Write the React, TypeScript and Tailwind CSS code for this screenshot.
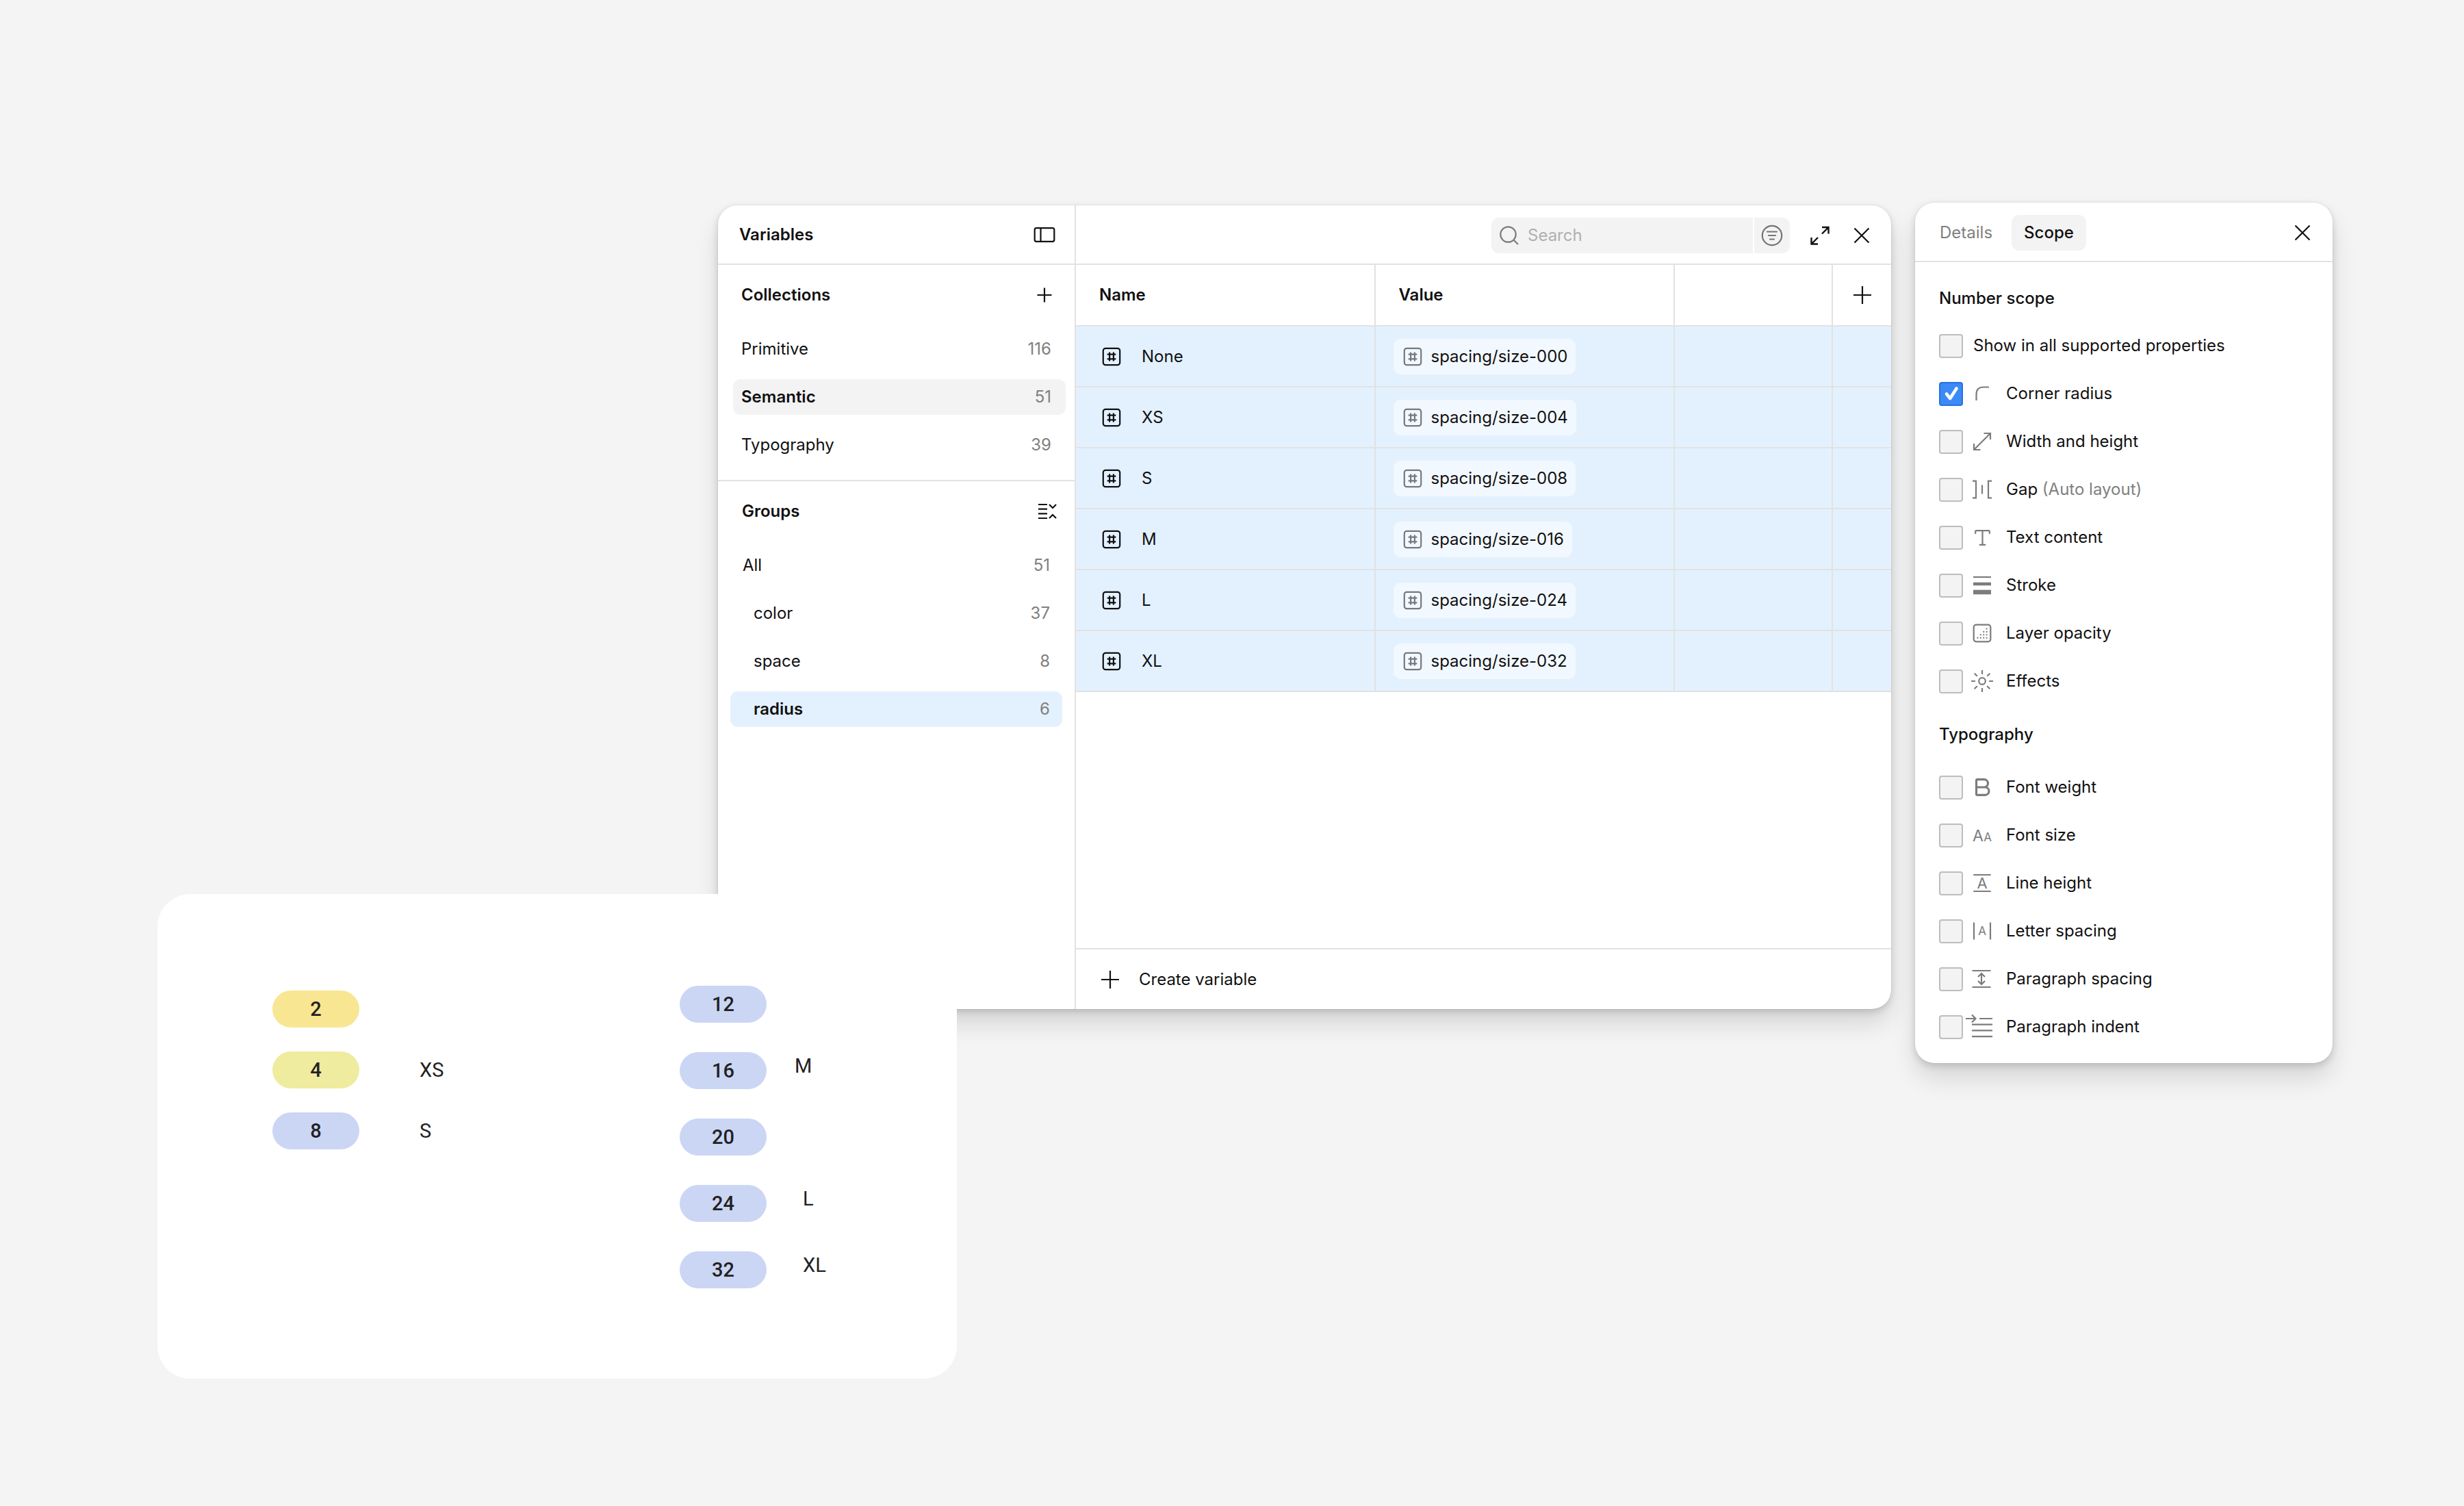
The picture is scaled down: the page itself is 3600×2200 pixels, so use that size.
import { useState } from 'react'
import type { ReactNode } from 'react'
import { Bold, Type } from 'lucide-react'

const collections = [
  { name: 'Primitive', count: 116 },
  { name: 'Semantic', count: 51 },
  { name: 'Typography', count: 39 },
]

const groups = [
  { name: 'All', count: 51 },
  { name: 'color', count: 37 },
  { name: 'space', count: 8 },
  { name: 'radius', count: 6 },
]

const variables = [
  { name: 'None', value: 'spacing/size-000' },
  { name: 'XS', value: 'spacing/size-004' },
  { name: 'S', value: 'spacing/size-008' },
  { name: 'M', value: 'spacing/size-016' },
  { name: 'L', value: 'spacing/size-024' },
  { name: 'XL', value: 'spacing/size-032' },
]

const smallSizes = [
  { value: 2, label: '', color: 'bg-[#f9e692]' },
  { value: 4, label: 'XS', color: 'bg-[#efeb9f]' },
  { value: 8, label: 'S', color: 'bg-[#cbd6f5]' },
]

const largeSizes = [
  { value: 12, label: '', margin: '' },
  { value: 16, label: 'M', margin: 'ml-[41px]' },
  { value: 20, label: '', margin: '' },
  { value: 24, label: 'L', margin: 'ml-[53px]' },
  { value: 32, label: 'XL', margin: 'ml-[53px]' },
]

// Icons are drawn around a 0,0 centre
function Icon({ size, className, children }: { size: 28 | 32 | 44; className?: string; children: ReactNode }) {
  const half = size / 2
  return (
    <svg
      width={size}
      height={size}
      viewBox={`${-half} ${-half} ${size} ${size}`}
      fill="none"
      stroke="currentColor"
      strokeWidth="2.2"
      aria-hidden="true"
      className={`shrink-0 overflow-visible ${className ?? ''}`}
    >
      {children}
    </svg>
  )
}

function PlusIcon({ large }: { large?: boolean }) {
  return (
    <Icon size={28}>
      <path d={large ? 'M0-13V13M-13 0H13' : 'M0-10.5V10.5M-10.5 0H10.5'} />
    </Icon>
  )
}

function CloseIcon() {
  return (
    <Icon size={28}>
      <path d="M-10.5-10.5 10.5 10.5M10.5-10.5-10.5 10.5" />
    </Icon>
  )
}

function NumberIcon({ className }: { className?: string }) {
  return (
    <Icon size={28} className={className}>
      <rect x="-12.2" y="-12.2" width="24.4" height="24.4" rx="3.5" />
      <path d="M-6.3-3.3H6.3M-6.3 3.3H6.3M-2.9-6.6V6.6M2.9-6.6V6.6" />
    </Icon>
  )
}

const scopeIcons = {
  corner: <path d="M-8.5 10V1C-8.5-6-5-9.5 2-9.5H10" />,
  resize: <path d="M2.5-12H12V-3M-12 3V12H-2.5M12-12-12 12" />,
  gap: <path d="M-14-12.3H-9V12.3H-14M14-12.3H9V12.3H14M0-6.5V6.5" />,
  stroke: (
    <>
      <path d="M-13-12H13" />
      <path strokeWidth="4.6" d="M-13-2H13" />
      <path strokeWidth="6.6" d="M-13 10H13" />
    </>
  ),
  opacity: (
    <>
      <rect x="-12.3" y="-12.3" width="24.6" height="24.6" rx="3.5" />
      <path strokeWidth="2" d="M5.6-6.5h2M1.2-2.1h2M5.6-2.1h2M-3.2 2.3h2M1.2 2.3h2M5.6 2.3h2M-7.6 6.7h2M-3.2 6.7h2M1.2 6.7h2M5.6 6.7h2" />
    </>
  ),
  effects: (
    <>
      <circle r="4.8" />
      <path d="M0-16V-10M0 16V10M-16 0H-10M16 0H10M-11.3-11.3-7.2-7.2M11.3 11.3 7.2 7.2M-11.3 11.3-7.2 7.2M11.3-11.3 7.2-7.2" />
    </>
  ),
  fontSize: (
    <g fill="currentColor" stroke="none" textAnchor="middle">
      <text x="-6" y="9" fontSize="23">A</text>
      <text x="8" y="9" fontSize="17">A</text>
    </g>
  ),
  lineHeight: (
    <>
      <path d="M-12.7-12H12.7M-12.7 12H12.7" />
      <text y="8" fontSize="22" textAnchor="middle" fill="currentColor" stroke="none">A</text>
    </>
  ),
  letterSpacing: (
    <>
      <path d="M-12-12.5V12.5M12-12.5V12.5" />
      <text y="6" fontSize="17" textAnchor="middle" fill="currentColor" stroke="none">A</text>
    </>
  ),
  paragraphSpacing: (
    <path d="M-14.5-12H12.5M-14.5 12H12.5M-1-7.5V7.5M-6-3 -1-8 4-3M-6 3-1 8 4 3" />
  ),
  paragraphIndent: (
    <path d="M-24-12H-10M-15-17.5-9.5-12-15-6.5M-4-12H15M-15-3.3H15M-15 5.4H15M-15 14.2H15" />
  ),
}

const numberScopes = [
  { label: 'Corner radius', icon: <Icon size={44}>{scopeIcons.corner}</Icon> },
  { label: 'Width and height', icon: <Icon size={44}>{scopeIcons.resize}</Icon> },
  { label: 'Gap', hint: '(Auto layout)', icon: <Icon size={44}>{scopeIcons.gap}</Icon> },
  { label: 'Text content', icon: <Type size={31} strokeWidth={1.7} /> },
  { label: 'Stroke', icon: <Icon size={44}>{scopeIcons.stroke}</Icon> },
  { label: 'Layer opacity', icon: <Icon size={44}>{scopeIcons.opacity}</Icon> },
  { label: 'Effects', icon: <Icon size={44}>{scopeIcons.effects}</Icon> },
]

const typographyScopes = [
  { label: 'Font weight', icon: <Bold size={34} strokeWidth={2.2} /> },
  { label: 'Font size', icon: <Icon size={44}>{scopeIcons.fontSize}</Icon> },
  { label: 'Line height', icon: <Icon size={44}>{scopeIcons.lineHeight}</Icon> },
  { label: 'Letter spacing', icon: <Icon size={44}>{scopeIcons.letterSpacing}</Icon> },
  { label: 'Paragraph spacing', icon: <Icon size={44}>{scopeIcons.paragraphSpacing}</Icon> },
  { label: 'Paragraph indent', icon: <Icon size={44}>{scopeIcons.paragraphIndent}</Icon> },
]

type ScopeRowProps = {
  label: string
  hint?: string
  icon?: ReactNode
  checked: boolean
  onToggle: () => void
}

function ScopeRow({ label, hint, icon, checked, onToggle }: ScopeRowProps) {
  return (
    <label className="flex h-[70px] items-center">
      <span className="grid shrink-0 place-items-center">
        <input
          type="checkbox"
          checked={checked}
          onChange={onToggle}
          className="col-start-1 row-start-1 size-[35px] appearance-none rounded-[4px] border-2 border-[#bdbdbd] bg-[#f3f3f3] checked:border-[#2573e0] checked:bg-[#3c8af7]"
        />
        {checked && (
          <Icon size={28} className="pointer-events-none col-start-1 row-start-1 text-white">
            <path strokeWidth="4.6" strokeLinecap="round" strokeLinejoin="round" d="M-7 .5-1.8 7 7.5-7.5" />
          </Icon>
        )}
      </span>
      {icon && <span className="ml-[6px] flex w-11 shrink-0 justify-center text-[#7c7c7c]">{icon}</span>}
      <span className={icon ? 'ml-[13px]' : 'ml-[15px]'}>
        {label}
        {hint && <span className="text-[#808080]"> {hint}</span>}
      </span>
    </label>
  )
}

function Sidebar() {
  const [collection, setCollection] = useState('Semantic')
  const [group, setGroup] = useState('radius')

  return (
    <aside className="w-[523px] shrink-0 border-r-2 border-[#e2e2e2]">
      <header className="flex h-[87px] items-center justify-between border-b-2 border-[#e2e2e2] pr-[28px] pl-[31px]">
        <h1 className="font-semibold">Variables</h1>
        <button aria-label="Toggle sidebar">
          <Icon size={32}>
            <rect x="-14.3" y="-9.8" width="28.6" height="19.6" rx="2.5" />
            <path d="M-5.5-9.8V9.8" />
          </Icon>
        </button>
      </header>

      <section className="border-b-2 border-[#e2e2e2] pb-4">
        <div className="flex h-[88px] items-center justify-between pr-[30px] pl-[34px]">
          <h2 className="font-semibold">Collections</h2>
          <button aria-label="Add collection">
            <PlusIcon />
          </button>
        </div>
        <ul className="pr-[13px] pl-[22px]">
          {collections.map((item) => (
            <li key={item.name} className="flex h-[70px] items-center">
              <button
                onClick={() => setCollection(item.name)}
                className={`flex h-[52px] w-full items-center justify-between rounded-[11px] pr-[21px] pl-[12px] ${
                  item.name === collection ? 'bg-[#f3f3f3] font-semibold' : ''
                }`}
              >
                {item.name}
                <span className="font-normal text-[#808080]">{item.count}</span>
              </button>
            </li>
          ))}
        </ul>
      </section>

      <section>
        <div className="flex h-[88px] items-center justify-between pr-[26px] pl-[35px]">
          <h2 className="font-semibold">Groups</h2>
          <button aria-label="Collapse groups">
            <Icon size={28}>
              <path d="M-13-10H0M-13-3.3H0M-13 3.3H0M-13 10H0M3-10 8-5 13-10M3 10 8 5 13 10" />
            </Icon>
          </button>
        </div>
        <ul className="px-[18px]">
          {groups.map((item) => (
            <li key={item.name} className="flex h-[70px] items-center">
              <button
                onClick={() => setGroup(item.name)}
                className={`flex h-[52px] w-full items-center justify-between rounded-[11px] pr-[18px] ${
                  item.name === 'All' ? 'pl-[18px]' : 'pl-[34px]'
                } ${item.name === group ? 'bg-[#e3f1ff] font-semibold' : ''}`}
              >
                {item.name}
                <span className="font-normal text-[#808080]">{item.count}</span>
              </button>
            </li>
          ))}
        </ul>
      </section>
    </aside>
  )
}

function VariableTable() {
  return (
    <table className="w-full table-fixed border-separate border-spacing-0 text-left">
      <colgroup>
        <col />
        <col />
        <col className="w-[231px]" />
        <col className="w-[85px]" />
      </colgroup>
      <thead>
        <tr className="h-[90px]">
          <th className="border-r-2 border-b-2 border-[#e2e2e2] pl-[34px] font-semibold">Name</th>
          <th className="border-r-2 border-b-2 border-[#e2e2e2] pl-[34px] font-semibold">Value</th>
          <th className="border-r-2 border-b-2 border-[#e2e2e2]" />
          <th className="border-b-2 border-[#e2e2e2]">
            <button aria-label="Add mode" className="flex w-full justify-center">
              <PlusIcon large />
            </button>
          </th>
        </tr>
      </thead>
      <tbody>
        {variables.map((variable) => (
          <tr key={variable.name} className="h-[89px] bg-[#e3f1ff]">
            <td className="border-r-2 border-b-2 border-[#e2e2e2] pl-[38px]">
              <span className="flex items-center gap-[30px]">
                <NumberIcon />
                {variable.name}
              </span>
            </td>
            <td className="border-r-2 border-b-2 border-[#e2e2e2] pl-[26px]">
              <span className="inline-flex h-[52px] items-center gap-[13px] rounded-[11px] bg-[#f2f8ff] pr-[12px] pl-[14px] align-middle">
                <NumberIcon className="text-[#757a80]" />
                {variable.value}
              </span>
            </td>
            <td className="border-r-2 border-b-2 border-[#e2e2e2]" />
            <td className="border-b-2 border-[#e2e2e2]" />
          </tr>
        ))}
      </tbody>
    </table>
  )
}

function VariablesWindow() {
  return (
    <section className="mt-1 flex min-h-[1174px] min-w-0 flex-1 overflow-hidden rounded-[28px] bg-white shadow-[0_0_2px_rgba(0,0,0,0.12),0_4px_11px_rgba(0,0,0,0.15),0_22px_35px_rgba(0,0,0,0.12)]">
      <Sidebar />
      <div className="flex min-w-0 flex-1 flex-col">
        <div className="flex h-[87px] shrink-0 items-center justify-end border-b-2 border-[#e2e2e2] pt-[3px] pr-[29px]">
          <div className="flex h-[52px] gap-[2px] overflow-hidden rounded-[11px]">
            <label className="flex w-[382px] items-center gap-[13px] bg-[#f3f3f3] pl-[12px]">
              <Icon size={28} className="text-[#7c7c7c]">
                <circle cx="-1.5" cy="-1.5" r="11.2" />
                <path d="M6.5 6.5 13 13" />
              </Icon>
              <input
                type="search"
                placeholder="Search"
                aria-label="Search"
                className="w-full min-w-0 bg-transparent outline-none placeholder:text-[#b0b0b0]"
              />
            </label>
            <button aria-label="Filter" className="flex w-[52px] items-center justify-center bg-[#f3f3f3] text-[#757575]">
              <Icon size={32}>
                <circle r="14.2" />
                <path strokeLinecap="round" d="M-7-5.5H7M-5 0H5M-3 5.5H3" />
              </Icon>
            </button>
          </div>
          <button aria-label="Expand" className="ml-[30px]">
            <Icon size={28}>
              <path strokeWidth="2.4" d="M3-12H12.5V-2.5M12.5-12 3-2.5M-3 12.5H-12.5V3M-12.5 12.5-3 3" />
            </Icon>
          </button>
          <button aria-label="Close" className="ml-[33px]">
            <CloseIcon />
          </button>
        </div>

        <VariableTable />

        <footer className="mt-auto flex h-[89px] items-center border-t-2 border-[#e2e2e2] pl-[36px]">
          <button className="flex items-center gap-[28px]">
            <PlusIcon large />
            Create variable
          </button>
        </footer>
      </div>
    </section>
  )
}

function ScopePanel() {
  const [checked, setChecked] = useState<string[]>(['Corner radius'])

  const toggle = (label: string) =>
    setChecked((prev) => (prev.includes(label) ? prev.filter((l) => l !== label) : [...prev, label]))

  const row = (scope: { label: string; hint?: string; icon?: ReactNode }) => (
    <ScopeRow
      key={scope.label}
      {...scope}
      checked={checked.includes(scope.label)}
      onToggle={() => toggle(scope.label)}
    />
  )

  return (
    <section className="w-[610px] shrink-0 rounded-[28px] bg-white shadow-[0_0_2px_rgba(0,0,0,0.12),0_4px_11px_rgba(0,0,0,0.15),0_22px_35px_rgba(0,0,0,0.12)]">
      <header className="flex h-[87px] items-center border-b-2 border-[#e2e2e2] pt-[3px] pr-[30px] pl-[18px]">
        <button className="h-[52px] rounded-[11px] px-[18px] text-[#808080]">Details</button>
        <button className="ml-[10px] h-[52px] rounded-[11px] bg-[#f3f3f3] px-[18px] font-medium">Scope</button>
        <button aria-label="Close" className="ml-auto">
          <CloseIcon />
        </button>
      </header>
      <div className="px-[35px] pt-[19px] pb-[18px]">
        <h2 className="flex h-[68px] items-center font-medium">Number scope</h2>
        {row({ label: 'Show in all supported properties' })}
        {numberScopes.map(row)}
        <h2 className="flex h-[85px] items-center font-medium">Typography</h2>
        {typographyScopes.map(row)}
      </div>
    </section>
  )
}

function Pill({ color, children }: { color: string; children: ReactNode }) {
  return (
    <span className={`flex h-[54px] w-[127px] items-center justify-center rounded-full font-medium ${color}`}>
      {children}
    </span>
  )
}

function SizeCard() {
  return (
    <section className="absolute top-[1306px] left-[230px] flex h-[708px] w-[1168px] gap-[340px] rounded-[48px] bg-white pt-[134px] pl-[168px] font-['Roboto','Liberation_Sans',sans-serif] text-[29px] text-[#222]">
      <ul className="mt-[7px] flex w-[255px] flex-col gap-[35px]">
        {smallSizes.map((size) => (
          <li key={size.value} className="flex items-center gap-[88px]">
            <Pill color={size.color}>{size.value}</Pill>
            <span>{size.label}</span>
          </li>
        ))}
      </ul>
      <ul className="flex flex-col gap-[43px]">
        {largeSizes.map((size) => (
          <li key={size.value} className="flex h-[54px] items-center">
            <Pill color="bg-[#cbd6f5]">{size.value}</Pill>
            <span className={`pb-[14px] ${size.margin}`}>{size.label}</span>
          </li>
        ))}
      </ul>
    </section>
  )
}

export default function App() {
  return (
    <main className="relative min-h-screen bg-[#f4f4f4] pt-[296px] pr-[192px] pl-[1049px] font-['Inter','Liberation_Sans',sans-serif] text-[24px] leading-[32px] text-[#111]">
      <div className="flex items-start gap-[35px]">
        <VariablesWindow />
        <ScopePanel />
      </div>
      <SizeCard />
    </main>
  )
}
